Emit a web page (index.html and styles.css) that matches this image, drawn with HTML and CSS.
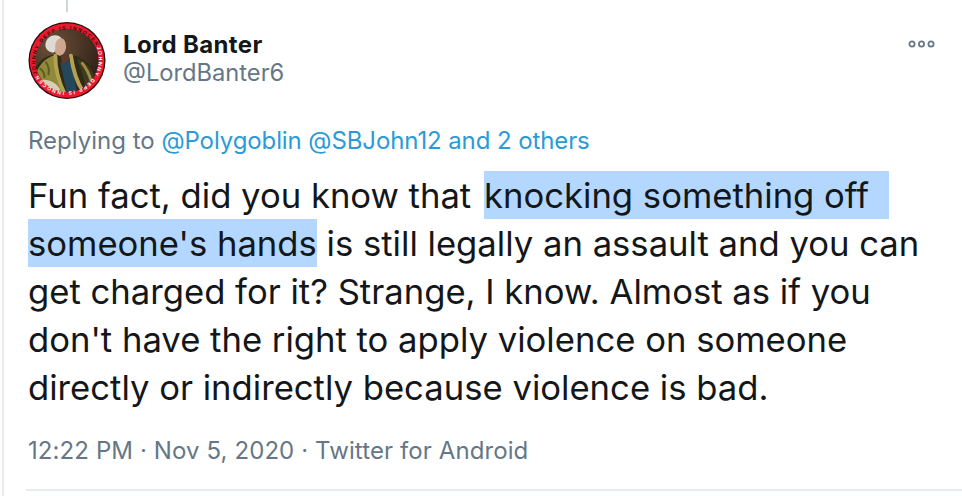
FILE: index.html
```html
<!DOCTYPE html>
<html lang="en">
<head>
<meta charset="utf-8">
<title>Lord Banter</title>
<link rel="stylesheet" href="styles.css">
</head>
<body>
<main class="tweet">
  <div class="thread-line"></div>
  <header class="head">
    <svg class="avatar" viewBox="0 0 80 80" aria-label="avatar">
      <defs>
        <clipPath id="inner"><circle cx="40" cy="40" r="32.500"/></clipPath>
        <radialGradient id="bg" cx="30%" cy="30%" r="75%">
          <stop offset="0" stop-color="#6d5038"/>
          <stop offset="1" stop-color="#2a1d14"/>
        </radialGradient>
        <path id="ring-a" d="M9.500 53.500A33.400 33.400 0 0 1 70.500 26.500"/>
        <path id="ring-b" d="M70.500 26.500A33.400 33.400 0 0 1 9.500 53.500"/>
      </defs>
      <circle cx="40" cy="40" r="39.500" fill="#2a0b0c"/>
      <circle cx="40" cy="40" r="38.200" fill="#ec1a2e"/>
      <g clip-path="url(#inner)">
        <rect width="80" height="80" fill="url(#bg)"/>
        <path d="M6 52c4-11 11-17 21-18l21 1c11 3 18 12 22 24l-2 21H8z" fill="#2f2a17"/>
        <path d="M7 60c1-11 7-20 18-25l5 1c-1 13 1 26 6 37l-12 3c-8-1-15-7-17-16z" fill="#8f8a3a"/>
        <path d="M12 48c3 2 5 6 5 10M18 41c3 4 4 9 3 14" fill="none" stroke="#5f5a24" stroke-width="2"/>
        <path d="M50 38c9 3 15 10 19 21l-9 10c-3-11-6-22-10-31z" fill="#3f3c1d"/>
        <path d="M33 42l11-2 6 31-10 3z" fill="#24485a"/>
        <path d="M28 35c0 14 4 28 10 40M44 35c2 13 6 27 12 36" fill="none" stroke="#b6a052" stroke-width="4" stroke-linecap="round"/>
        <path d="M55 42c4 5 8 12 10 20" fill="none" stroke="#a08c45" stroke-width="3"/>
        <path d="M14 60c8-1 15 3 19 10l-6 5-13-8z" fill="#dccdb8"/>
        <path d="M33 33l8 0 2 6-8 5z" fill="#5d3a2a"/>
        <path d="M26 22c1-4 5-6 8-5 4 1 5 5 5 10-1 5-3 8-7 8-4-1-7-7-6-13z" fill="#d0a68d"/>
        <path d="M18 26c-1-7 4-12 10-12 3 0 5 1 6 3-4 1-6 4-6 8 0 3 0 6-2 7-4 0-7-3-8-6z" fill="#dedbd4"/>
      </g>
      <text class="ring-text ring-dark"><textPath href="#ring-a" textLength="104">JOHNNY DEPP IS INNOCENT</textPath></text>
      <text class="ring-text ring-light"><textPath href="#ring-b" textLength="104">JOHNNY DEPP IS INNOCENT</textPath></text>
    </svg>
    <div class="names">
      <div class="display">Lord Banter</div>
      <div class="handle">@LordBanter6</div>
    </div>
    <svg class="more" viewBox="0 0 27 8" aria-label="more">
      <circle cx="4" cy="4" r="2.600"/><circle cx="13.500" cy="4" r="2.600"/><circle cx="23" cy="4" r="2.600"/>
    </svg>
  </header>
  <p class="reply">Replying to <span class="link">@Polygoblin @SBJohn12 and 2 others</span></p>
  <p class="body">Fun fact, did you know that <span class="hl hl-first">knocking something off </span><br><span class="hl">someone's hands</span> is still legally an assault and you can get charged for it? Strange, I know. Almost as if you don't have the right to apply violence on someone directly or indirectly because violence is bad.</p>
  <p class="meta">12:22 PM · Nov 5, 2020 · Twitter for Android</p>
  <div class="rule"></div>
</main>
</body>
</html>
```
FILE: styles.css
```css
* { box-sizing: border-box; }
html, body { margin: 0; padding: 0; background: #fff; }
body { width: 962px; height: 496px; overflow: hidden; font-family: Inter, "Liberation Sans", sans-serif; }
.tweet { position: relative; height: 496px; margin-left: 2px; padding: 21px 0 0 24px; border-left: 2px solid #e6ecf0; }
.thread-line { position: absolute; left: 62px; top: 0; width: 2px; height: 12px; background: #ccd6dd; }
.head { display: flex; align-items: flex-start; height: 80px; }
.avatar { width: 78px; height: 79px; flex: none; }
.ring-text { font: 700 5.200px "Liberation Sans", sans-serif; }
.ring-dark { fill: #3a0508; }
.ring-light { fill: #fff; }
.names { margin-left: 17px; padding-top: 10px; }
.display { font-size: 24px; line-height: 28px; font-weight: 700; color: #14171a; letter-spacing: .35px; }
.handle { font-size: 23.700px; line-height: 27px; color: #657786; }
.more { width: 27px; height: 8px; margin-left: auto; margin-right: 27px; margin-top: 19px; fill: none; stroke: #657786; stroke-width: 1.800; }
.reply { margin: 24px 0 0; font-size: 24px; line-height: 32px; color: #657786; }
.link { color: #2b9bd8; letter-spacing: -.1px; }
.body { margin: 14px 0 0; width: 900px; font-size: 34.650px; line-height: 48px; color: #14171a; }
.hl { background: #b3d7fe; padding: 3px 0; }
.hl-first { margin-left: 3px; padding-right: 20px; }
.meta { margin: 25px 0 0; font-size: 24px; line-height: 30px; color: #657786; letter-spacing: .1px; }
.rule { height: 2px; margin: 23px 0 0 -2px; background: #e6ecf0; }
```
